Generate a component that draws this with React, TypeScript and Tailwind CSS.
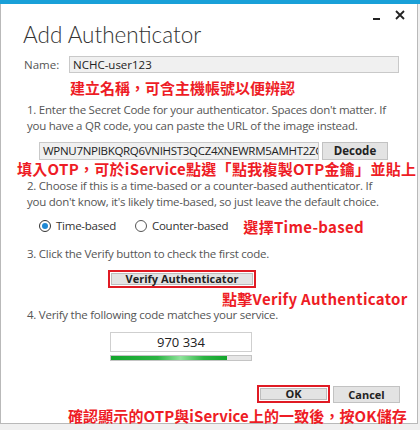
import React from "react";

const ui = { fontFamily: '"Open Sans", "Noto Sans", sans-serif' };
const cjk = { fontFamily: '"Noto Sans CJK TC", "Noto Sans CJK SC", sans-serif' };

function Red({ children, className = "" }: { children: React.ReactNode; className?: string }) {
  return (
    <div className={"text-[15px] font-bold text-[#ee1c25] leading-none whitespace-nowrap " + className} style={cjk}>
      {children}
    </div>
  );
}

export default function App() {
  return (
    <div className="w-[420px] h-[430px] bg-[#f0f0f0] overflow-hidden" style={ui}>
      <div className="w-[420px] h-[4px] bg-[#19a0d8]" />
      <div className="w-[418px] h-[420px] bg-white border-l border-r border-b border-[#b9b9b9] flex flex-col relative">
        {/* title bar controls */}
        <div className="h-[17px] flex items-start justify-end pr-[12px] gap-[14px]">
          <svg width="8" height="17" viewBox="0 0 8 17">
            <rect x="0" y="14" width="7" height="2" fill="#222" />
          </svg>
          <svg width="10" height="17" viewBox="0 0 10 17">
            <path d="M1 7 L9 15 M9 7 L1 15" stroke="#222" strokeWidth="1.8" />
          </svg>
        </div>
        {/* title */}
        <div className="h-[30px] pl-[22px] flex items-center">
          <span className="text-[22.5px] font-light text-[#333] leading-none" style={{ fontFamily: '"Lato", "Open Sans", sans-serif' }}>
            Add Authenticator
          </span>
        </div>
        {/* name row */}
        <div className="mt-[6px] h-[17px] pl-[23px] flex items-center">
          <span className="w-[45px] text-[11.5px] text-[#555]">Name:</span>
          <div className="w-[330px] h-[17px] bg-[#f0f0f0] border border-[#c9c9c9] flex items-center pl-[3px] text-[11.5px] text-[#222]">
            NCHC-user123
          </div>
        </div>
        <div className="mt-[6px] h-[17px] pl-[69px] flex items-center">
          <Red className="tracking-[0px]">建立名稱，可含主機帳號以便辨認</Red>
        </div>
        {/* step 1 */}
        <div className="mt-[6px] pl-[26px] pr-[20px] text-[11.5px] leading-[16px] text-[#555] tracking-[-0.25px]">
          <div className="whitespace-nowrap">1. Enter the Secret Code for your authenticator. Spaces don't matter. If</div>
          <div className="whitespace-nowrap">you have a QR code, you can paste the URL of the image instead.</div>
        </div>
        <div className="mt-[8px] h-[18px] pl-[38px] flex items-center gap-[3px]">
          <div className="w-[280px] h-[18px] bg-[#f0f0f0] border border-[#c9c9c9] flex items-center pl-[3px] overflow-hidden whitespace-nowrap text-[11.5px] text-[#222] tracking-[-0.3px]">
            WPNU7NPIBKQRQ6VNIHST3QCZ4XNEWRM5AMHT2ZGUI
          </div>
          <div className="w-[66px] h-[18px] bg-[#e3e3e3] border border-[#c2c2c2] flex items-center justify-center text-[11.5px] font-bold text-[#222]">
            Decode
          </div>
        </div>
        <div className="mt-[1px] h-[17px] pl-[16px] flex items-center">
          <Red className="tracking-[0.3px]">填入OTP，可於iService點選「點我複製OTP金鑰」並貼上</Red>
        </div>
        {/* step 2 */}
        <div className="mt-[1px] pl-[26px] pr-[20px] text-[11.5px] leading-[16px] text-[#555] tracking-[-0.25px]">
          <div className="whitespace-nowrap">2. Choose if this is a time-based or a counter-based authenticator. If</div>
          <div className="whitespace-nowrap">you don't know, it's likely time-based, so just leave the default choice.</div>
        </div>
        {/* radios */}
        <div className="mt-[8px] h-[16px] pl-[38px] flex items-center text-[11.5px] text-[#333] tracking-[-0.25px]">
          <div className="w-[12px] h-[12px] rounded-full border border-[#333] flex items-center justify-center">
            <div className="w-[6px] h-[6px] rounded-full bg-[#1e88d4]" />
          </div>
          <span className="ml-[5px]">Time-based</span>
          <div className="ml-[19px] w-[12px] h-[12px] rounded-full border border-[#555]" />
          <span className="ml-[5px]">Counter-based</span>
          <Red className="ml-[15px] tracking-[0.3px]">選擇Time-based</Red>
        </div>
        {/* step 3 */}
        <div className="mt-[12px] pl-[26px] text-[11.5px] leading-[16px] text-[#555] tracking-[-0.25px] whitespace-nowrap">
          3. Click the Verify button to check the first code.
        </div>
        <div className="mt-[8px] h-[18px] pl-[107px] flex">
          <div className="w-[148px] h-[18px] border-2 border-[#e01b24] p-[1px]">
            <div className="h-full bg-[#e3e3e3] border border-[#bdbdbd] flex items-center justify-center text-[11px] font-bold text-[#222]">
              Verify Authenticator
            </div>
          </div>
        </div>
        <div className="mt-[2px] h-[17px] pl-[221px] flex items-center">
          <Red className="tracking-[0.3px]">點擊Verify Authenticator</Red>
        </div>
        {/* step 4 */}
        <div className="mt-[1px] pl-[26px] text-[11.5px] leading-[16px] text-[#555] tracking-[-0.25px] whitespace-nowrap">
          4. Verify the following code matches your service.
        </div>
        <div className="mt-[9px] pl-[109px] flex flex-col gap-[3px]">
          <div className="w-[142px] h-[20px] bg-white border border-[#cfcfcf] flex items-center justify-center text-[13px] text-[#222]">
            970 334
          </div>
          <div className="w-[142px] h-[6px] bg-[#e6e6e6] border border-[#c4c4c4] overflow-hidden">
            <div
              className="h-full w-[116px]"
              style={{ background: "linear-gradient(90deg,#13a62c 0%,#2bb443 40%,#8fe39b 60%,#2bb443 80%,#13a62c 100%)" }}
            />
          </div>
        </div>
        {/* buttons */}
        <div className="mt-[24px] h-[18px] pl-[256px] flex gap-[3px]">
          <div className="w-[73px] h-[18px] border-2 border-[#e01b24] p-[1px]">
            <div className="h-full bg-[#e3e3e3] border border-[#bdbdbd] flex items-center justify-center text-[11px] font-bold text-[#222]">
              OK
            </div>
          </div>
          <div className="w-[67px] h-[17px] mt-[1px] bg-[#e3e3e3] border border-[#c2c2c2] flex items-center justify-center text-[11px] font-bold text-[#222]">
            Cancel
          </div>
        </div>
        <div className="mt-[4px] h-[16px] pl-[67px] flex items-center">
          <Red className="tracking-[0.1px]">確認顯示的OTP與iService上的一致後，按OK儲存</Red>
        </div>
      </div>
    </div>
  );
}
